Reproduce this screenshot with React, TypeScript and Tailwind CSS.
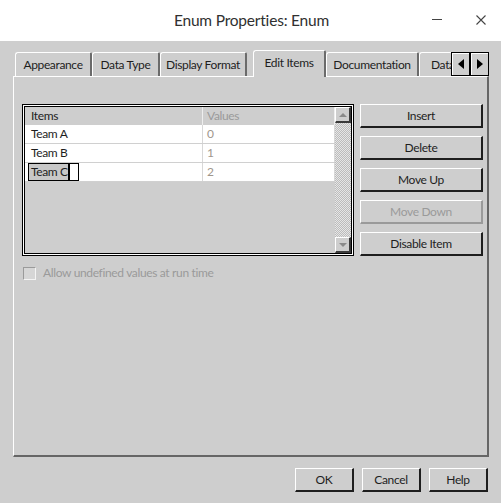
import React from 'react';
import clsx from 'clsx';

const ui = "font-['Lato','Noto_Sans',sans-serif] text-[12px] tracking-[-0.35px]";

function Tab({ label, className }: { label: string; className?: string }) {
  return (
    <div
      className={clsx(
        'h-[24px] flex items-center justify-center whitespace-nowrap rounded-tl-[3px] rounded-tr-[2px] border-t border-l border-r-2 border-t-white border-l-white border-r-[#6b6b6b]',
        className
      )}
    >
      {label}
    </div>
  );
}

function Btn({ label, className, disabled }: { label: string; className?: string; disabled?: boolean }) {
  return (
    <div
      className={clsx(
        'h-[24px] flex items-center justify-center border-t border-l border-r-2 border-b-2 border-t-white border-l-white',
        disabled ? 'text-[#9a9a9a] border-r-[#9a9a9a] border-b-[#9a9a9a]' : 'text-[#1e1e1e] border-r-[#1e1e1e] border-b-[#1e1e1e]',
        className
      )}
    >
      {label}
    </div>
  );
}

function ScrollButton({ up }: { up?: boolean }) {
  return (
    <div className="h-[16px] flex items-center justify-center bg-[#cecece] border-t border-l border-r-2 border-b-2 border-t-white border-l-white border-r-[#3a3a3a] border-b-[#3a3a3a]">
      {up ? (
        <div className="w-0 h-0 border-x-[4px] border-x-transparent border-b-[4px] border-b-[#8a8a8a]" />
      ) : (
        <div className="w-0 h-0 border-x-[4px] border-x-transparent border-t-[4px] border-t-[#8a8a8a]" />
      )}
    </div>
  );
}

function ArrowButton({ left }: { left?: boolean }) {
  return (
    <div className="relative z-10 h-[24px] w-[19px] flex items-center justify-center bg-[#cecece] border border-black shadow-[inset_1px_1px_0_#fff]">
      {left ? (
        <div className="w-0 h-0 border-y-[5px] border-y-transparent border-r-[6px] border-r-black" />
      ) : (
        <div className="w-0 h-0 border-y-[5px] border-y-transparent border-l-[6px] border-l-black" />
      )}
    </div>
  );
}

const rows = [
  { name: 'Team A', value: '0' },
  { name: 'Team B', value: '1' },
  { name: 'Team C', value: '2' },
];

export default function App() {
  return (
    <div className={clsx('w-[501px] h-[503px] flex flex-col bg-[#cecece] text-[#1e1e1e]', ui)}>
      {/* Title bar */}
      <div className="h-[41px] shrink-0 bg-white grid grid-cols-[1fr_auto_1fr] items-center">
        <div />
        <div className="text-[15.5px] text-[#303030] tracking-[-0.2px] pl-[2px]">Enum Properties: Enum</div>
        <div className="flex justify-end items-center gap-[34px] pr-[15px]">
          <div className="w-[10px] h-[1px] bg-[#444] mt-[-2px]" />
          <svg width="10" height="10" viewBox="0 0 10 10" className="mt-[-2px]">
            <path d="M0.5 0.5 L9.5 9.5 M9.5 0.5 L0.5 9.5" stroke="#444" strokeWidth="1.1" />
          </svg>
        </div>
      </div>

      {/* Body */}
      <div className="flex-1 flex flex-col">
        {/* Tabs */}
        <div className="flex items-end pl-[15px] pt-[9px]">
          <Tab label="Appearance" className="w-[77px]" />
          <Tab label="Data Type" className="w-[68px]" />
          <Tab label="Display Format" className="w-[87px]" />
          <div className="w-[6px]" />
          <div className="relative z-10 -mb-px h-[27px] w-[73px] flex items-center justify-center pb-[2px] whitespace-nowrap bg-[#cecece] rounded-tl-[3px] rounded-tr-[2px] border-t border-l border-r-2 border-t-white border-l-white border-r-[#6b6b6b]">
            Edit Items
          </div>
          <Tab label="Documentation" className="w-[93px]" />
          <div className="h-[24px] w-[32px] flex items-center whitespace-nowrap pl-[11px] rounded-tl-[3px] border-t border-l border-t-white border-l-white">
            Data
          </div>
          <ArrowButton left />
          <ArrowButton />
        </div>

        {/* Panel */}
        <div className="ml-[13px] w-[476px] h-[381px] shrink-0 pt-[27px] pl-[8px] border-t border-l border-r-2 border-b-2 border-t-white border-l-white border-r-[#666] border-b-[#666]">
          <div className="flex">
            {/* Table */}
            <div className="w-[332px] h-[152px] border border-black bg-white p-px">
              <div className="w-full h-full border border-black flex bg-[#cecece]">
                <div className="flex-1 flex flex-col">
                  <div className="h-[18px] flex items-center">
                    <div className="w-[178px] h-full flex items-center pl-[6px] border-r border-r-[#eeeeee]">Items</div>
                    <div className="flex-1 h-full flex items-center pl-[4px] text-[#9a9a9a] border-r border-r-[#eeeeee]">Values</div>
                  </div>
                  {rows.map((r, i) => (
                    <div key={r.name} className="h-[19px] flex bg-white border-b border-b-[#d0d0d0]">
                      <div className="w-[178px] h-full flex items-center border-r border-r-[#d8d8d8]">
                        {i === 2 ? (
                          <div className="ml-[3px] mt-[-1px] w-[51px] h-[18px] flex border border-black bg-white">
                            <span className="bg-[#c8c8c8] pl-[2px] flex items-center">Team C</span>
                            <span className="w-[2px] h-full bg-black" />
                          </div>
                        ) : (
                          <span className="pl-[6px]">{r.name}</span>
                        )}
                      </div>
                      <div className="flex-1 h-full flex items-center pl-[4px] text-[#a0968c] border-r border-r-[#d8d8d8]">
                        {r.value}
                      </div>
                    </div>
                  ))}
                </div>
                {/* Scrollbar */}
                <div className="w-[16px] flex flex-col bg-[image:repeating-conic-gradient(#bcbcbc_0%_25%,#e6e6e6_0%_50%)] bg-size-[2px_2px]">
                  <ScrollButton up />
                  <div className="flex-1" />
                  <ScrollButton />
                </div>
              </div>
            </div>

            {/* Buttons */}
            <div className="ml-[6px] w-[123px] flex flex-col gap-[8px]">
              <Btn label="Insert" />
              <Btn label="Delete" />
              <Btn label="Move Up" />
              <Btn label="Move Down" disabled />
              <Btn label="Disable Item" />
            </div>
          </div>

          {/* Checkbox */}
          <div className="mt-[8px] ml-[1px] flex items-center gap-[7px] text-[#9a9a9a]">
            <div className="w-[13px] h-[13px] bg-[#d6d6d6] border-t border-l border-r border-b border-t-[#9a9a9a] border-l-[#9a9a9a] border-r-[#f4f4f4] border-b-[#f4f4f4]" />
            <span>Allow undefined values at run time</span>
          </div>
        </div>

        {/* Dialog buttons */}
        <div className="flex justify-end gap-[8px] pr-[13px] pt-[11px]">
          <Btn label="OK" className="w-[59px]" />
          <Btn label="Cancel" className="w-[59px]" />
          <Btn label="Help" className="w-[59px]" />
        </div>
      </div>
    </div>
  );
}
